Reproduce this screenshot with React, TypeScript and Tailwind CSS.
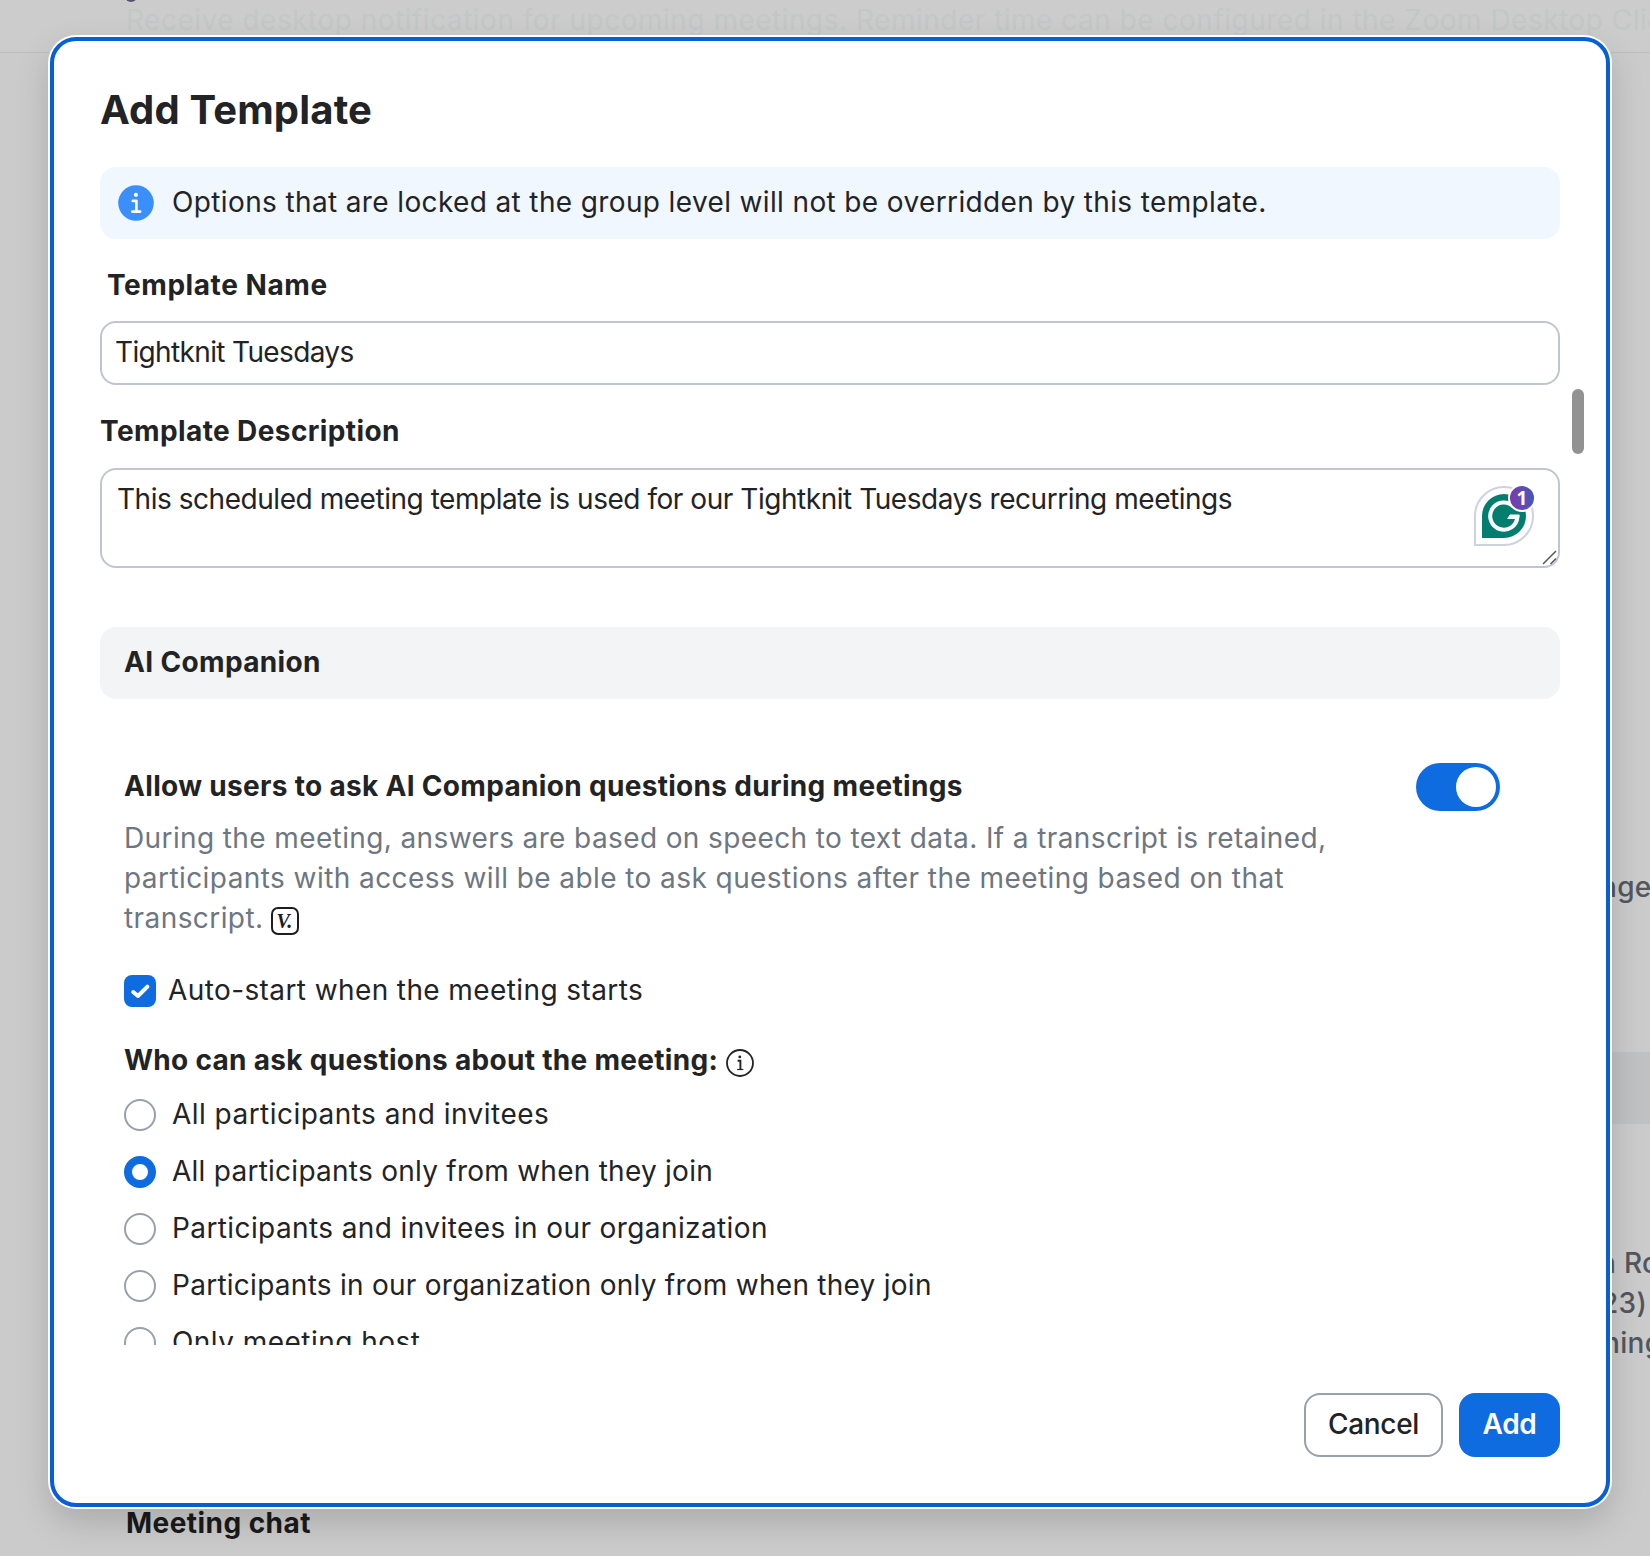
import React, { useState } from 'react';
import clsx from 'clsx';

interface AskOption {
  id: string;
  label: string;
  tracking: string;
}

const askOptions: AskOption[] = [
  { id: 'all-invitees', label: 'All participants and invitees', tracking: 'tracking-[0.46px]' },
  { id: 'all-join', label: 'All participants only from when they join', tracking: 'tracking-[0.255px]' },
  { id: 'org-invitees', label: 'Participants and invitees in our organization', tracking: 'tracking-[0.4px]' },
  { id: 'org-join', label: 'Participants in our organization only from when they join', tracking: 'tracking-[0.265px]' },
  { id: 'host', label: 'Only meeting host', tracking: 'tracking-[0.46px]' },
];

const InfoFilledIcon = () => (
  <svg className="w-9 h-9 shrink-0" viewBox="0 0 36 36" fill="none">
    <circle cx="18" cy="18" r="17.8" fill="#3b8ffa" />
    <circle cx="17.9" cy="9.8" r="2.1" fill="#fff" />
    <path d="M14.8 15.9H18.4V26.2M14.3 26.6H22.2" stroke="#fff" strokeWidth="2.6" strokeLinecap="round" strokeLinejoin="round" />
  </svg>
);

const InfoOutlineIcon = () => (
  <svg className="w-7 h-7" viewBox="0 0 28 28" fill="none">
    <circle cx="14" cy="14" r="13" stroke="#222325" strokeWidth="1.8" />
    <circle cx="13.8" cy="7.9" r="1.4" fill="#222325" />
    <path d="M11.6 11.8H14.4V20.4" stroke="#222325" strokeWidth="1.9" />
    <path d="M11.2 20.5H17.3" stroke="#222325" strokeWidth="1.2" />
  </svg>
);

// Small outlined box with the "V." note marker
const VersionIcon = () => (
  <span className="flex w-7 h-7 items-center justify-center rounded-[7px] border-2 border-[#1c1d1f] font-['Liberation_Serif',serif] text-[20px] italic font-bold leading-none text-[#1c1d1f]">
    V.
  </span>
);

const GrammarlyBadge = () => (
  <div className="absolute right-[26px] top-[18px] w-[60px] h-[60px]">
    <svg className="w-[60px] h-[60px]" viewBox="0 0 60 60" fill="none">
      <path d="M1 59V30A29 29 0 1 1 30 59Z" fill="#fff" stroke="#ced2e0" strokeWidth="2" />
      <path d="M8 52V30A22 22 0 1 1 30 52Z" fill="#027e6f" />
      <path d="M39.6 20.6A13.6 13.6 0 1 0 43.4 31H35" stroke="#fff" strokeWidth="4" />
      <path d="M36 28.6H45.4L45 33H33Z" fill="#fff" />
    </svg>
    <span className="absolute -top-[2px] -right-[2px] flex w-7 h-7 items-center justify-center rounded-full border-2 border-white bg-linear-to-r from-[#7a3aa8] to-[#3f57bd] font-['Open_Sans',sans-serif] text-[19px] font-bold leading-none text-white">
      1
    </span>
  </div>
);

const ResizeGrip = () => (
  <svg className="absolute right-[3px] bottom-[3px] w-[15px] h-[15px]" viewBox="0 0 15 15" fill="none">
    <path d="M1 14L14 1M8.5 14L14 8.5" stroke="#55585c" strokeWidth="1.5" />
  </svg>
);

const PageBackground = () => (
  <div className="h-full bg-[#cbcbcb] flex flex-col text-[28px] leading-10 whitespace-nowrap">
    <div className="h-[53px] shrink-0 border-b border-[#bdbdbd] bg-[#cccccc] pl-[126px]">
      <div className="relative">
        <span className="absolute -left-[1px] -top-[10px] w-3 h-3 rounded-full bg-[#57506e]" />
      </div>
      <p className="text-[#c4c7c7] tracking-[0.5px]">
        Receive desktop notification for upcoming meetings. Reminder time can be configured in the Zoom Desktop Client
      </p>
    </div>
    <div className="flex-1 flex flex-col font-medium text-[#52565e] tracking-[0.3px]">
      <p className="mt-[814px] pl-[1600px]">nge</p>
      <div className="mt-[145px] ml-[1590px] h-[72px] shrink-0 bg-[#bfc1c2]" />
      <p className="mt-[119px] pl-[1599px]">n Ro</p>
      <p className="pl-[1601px]">23)</p>
      <p className="pl-[1603px]">ning</p>
    </div>
    <p className="pb-[13px] pl-[126px] font-bold text-[#191a1b] tracking-[0.45px]">Meeting chat</p>
  </div>
);

const App: React.FC = () => {
  const [name, setName] = useState('Tightknit Tuesdays');
  const [description, setDescription] = useState(
    'This scheduled meeting template is used for our Tightknit Tuesdays recurring meetings'
  );
  const [enabled, setEnabled] = useState(true);
  const [autoStart, setAutoStart] = useState(true);
  const [selected, setSelected] = useState('all-join');

  return (
    <div className="relative w-[1650px] h-[1556px] overflow-hidden font-['Inter','Liberation_Sans',sans-serif] text-[#222325]">
      <PageBackground />

      {/* Dialog */}
      <div
        role="dialog"
        className="absolute left-[50px] top-[37px] w-[1560px] h-[1470px] rounded-[26px] border-4 border-[#0560d6] bg-white px-[46px] pt-[45px] flex flex-col text-[28px] leading-10 shadow-[0_0_0_2px_#fff,0_14px_34px_rgba(0,0,0,0.17)]"
      >
        <div className="h-[1259px] shrink-0 overflow-hidden">
          <h1 className="text-[40px] leading-12 font-bold tracking-[0.16px]">Add Template</h1>

          {/* Info banner */}
          <div className="mt-[33px] h-[72px] rounded-2xl bg-[#f0f7ff] flex items-center gap-[18px] pl-[18px]">
            <InfoFilledIcon />
            <p className="pb-0.5 tracking-[0.37px]">
              Options that are locked at the group level will not be overridden by this template.
            </p>
          </div>

          {/* Name */}
          <label className="mt-[26px] block pl-[7px] font-bold tracking-[0.56px]">Template Name</label>
          <input
            value={name}
            onChange={(e) => setName(e.target.value)}
            className="mt-4 block w-full h-16 rounded-2xl border-2 border-[#c1c5d0] bg-white pl-[13px] pb-0.5 tracking-[-0.64px] outline-none"
          />

          {/* Description */}
          <label className="mt-[26px] block font-bold tracking-[0.4px]">Template Description</label>
          <div className="relative mt-[17px]">
            <textarea
              value={description}
              onChange={(e) => setDescription(e.target.value)}
              className="block w-full h-[100px] resize-none overflow-hidden rounded-2xl border-2 border-[#c1c5d0] bg-white pl-[15px] pt-[9px] leading-10 tracking-[-0.46px] outline-none"
            />
            <GrammarlyBadge />
            <ResizeGrip />
          </div>

          {/* AI Companion */}
          <div className="mt-[59px] h-[72px] rounded-2xl bg-[#f2f4f6] flex items-center pl-6 pb-0.5 font-bold tracking-[0.35px]">
            AI Companion
          </div>

          <div className="pl-6">
            <div className="mt-[67px] flex items-center justify-between pr-[60px]">
              <h2 className="font-bold tracking-[0.32px]">Allow users to ask AI Companion questions during meetings</h2>
              <button
                type="button"
                role="switch"
                aria-checked={enabled}
                onClick={() => setEnabled(!enabled)}
                className={clsx(
                  '-mt-[3px] -mb-[5px] flex w-[84px] h-12 items-center rounded-full px-1',
                  enabled ? 'justify-end bg-[#0e6ce0]' : 'justify-start bg-[#98a0a9]'
                )}
              >
                <span className="w-10 h-10 rounded-full bg-white" />
              </button>
            </div>

            <div className="mt-3 text-[#6e7680] whitespace-nowrap">
              <p className="tracking-[0.385px]">During the meeting, answers are based on speech to text data. If a transcript is retained,</p>
              <p className="tracking-[0.425px]">participants with access will be able to ask questions after the meeting based on that</p>
              <div className="flex items-center gap-[7px]">
                <p className="tracking-[0.42px]">transcript.</p>
                <span className="mt-[6px]">
                  <VersionIcon />
                </span>
              </div>
            </div>

            <button type="button" onClick={() => setAutoStart(!autoStart)} className="mt-8 flex items-center gap-3">
              <span
                className={clsx(
                  'flex w-8 h-8 items-center justify-center rounded-lg',
                  autoStart ? 'bg-[#0e6ce0]' : 'border-2 border-[#98a0a9]'
                )}
              >
                {autoStart && (
                  <svg className="w-8 h-8" viewBox="0 0 32 32" fill="none">
                    <path d="M9.2 17L14 21L23.4 11.6" stroke="#fff" strokeWidth="4" strokeLinecap="round" strokeLinejoin="round" />
                  </svg>
                )}
              </span>
              <span className="pb-0.5 tracking-[0.4px]">Auto-start when the meeting starts</span>
            </button>

            <div className="mt-7 flex items-center gap-2">
              <h3 className="font-bold tracking-[0.3px]">Who can ask questions about the meeting:</h3>
              <span className="mt-[6px]">
                <InfoOutlineIcon />
              </span>
            </div>

            <div className="mt-[19px] flex flex-col gap-[25px]">
              {askOptions.map((option) => (
                <button
                  key={option.id}
                  type="button"
                  role="radio"
                  aria-checked={selected === option.id}
                  onClick={() => setSelected(option.id)}
                  className="flex h-8 items-center gap-4"
                >
                  <span
                    className={clsx(
                      'w-8 h-8 shrink-0 rounded-full bg-white',
                      selected === option.id ? 'border-8 border-[#0e6ce0]' : 'border-2 border-[#98a0a9]'
                    )}
                  />
                  <span className={clsx('pb-0.5 whitespace-nowrap', option.tracking)}>{option.label}</span>
                </button>
              ))}
            </div>
          </div>
        </div>

        {/* Footer */}
        <div className="mt-12 flex justify-end gap-4">
          <button type="button" className="w-[139px] h-16 rounded-2xl border-2 border-[#98a0ac] bg-white pb-0.5 font-medium tracking-[-0.3px]">
            Cancel
          </button>
          <button type="button" className="w-[101px] h-16 rounded-2xl bg-[#0e6ce0] pb-0.5 font-semibold text-white tracking-[-0.3px]">
            Add
          </button>
        </div>

        {/* Scroll thumb */}
        <span className="absolute right-[22px] top-[348px] w-3 h-[65px] rounded-full bg-[#929292]" />
      </div>
    </div>
  );
};

export default App;
